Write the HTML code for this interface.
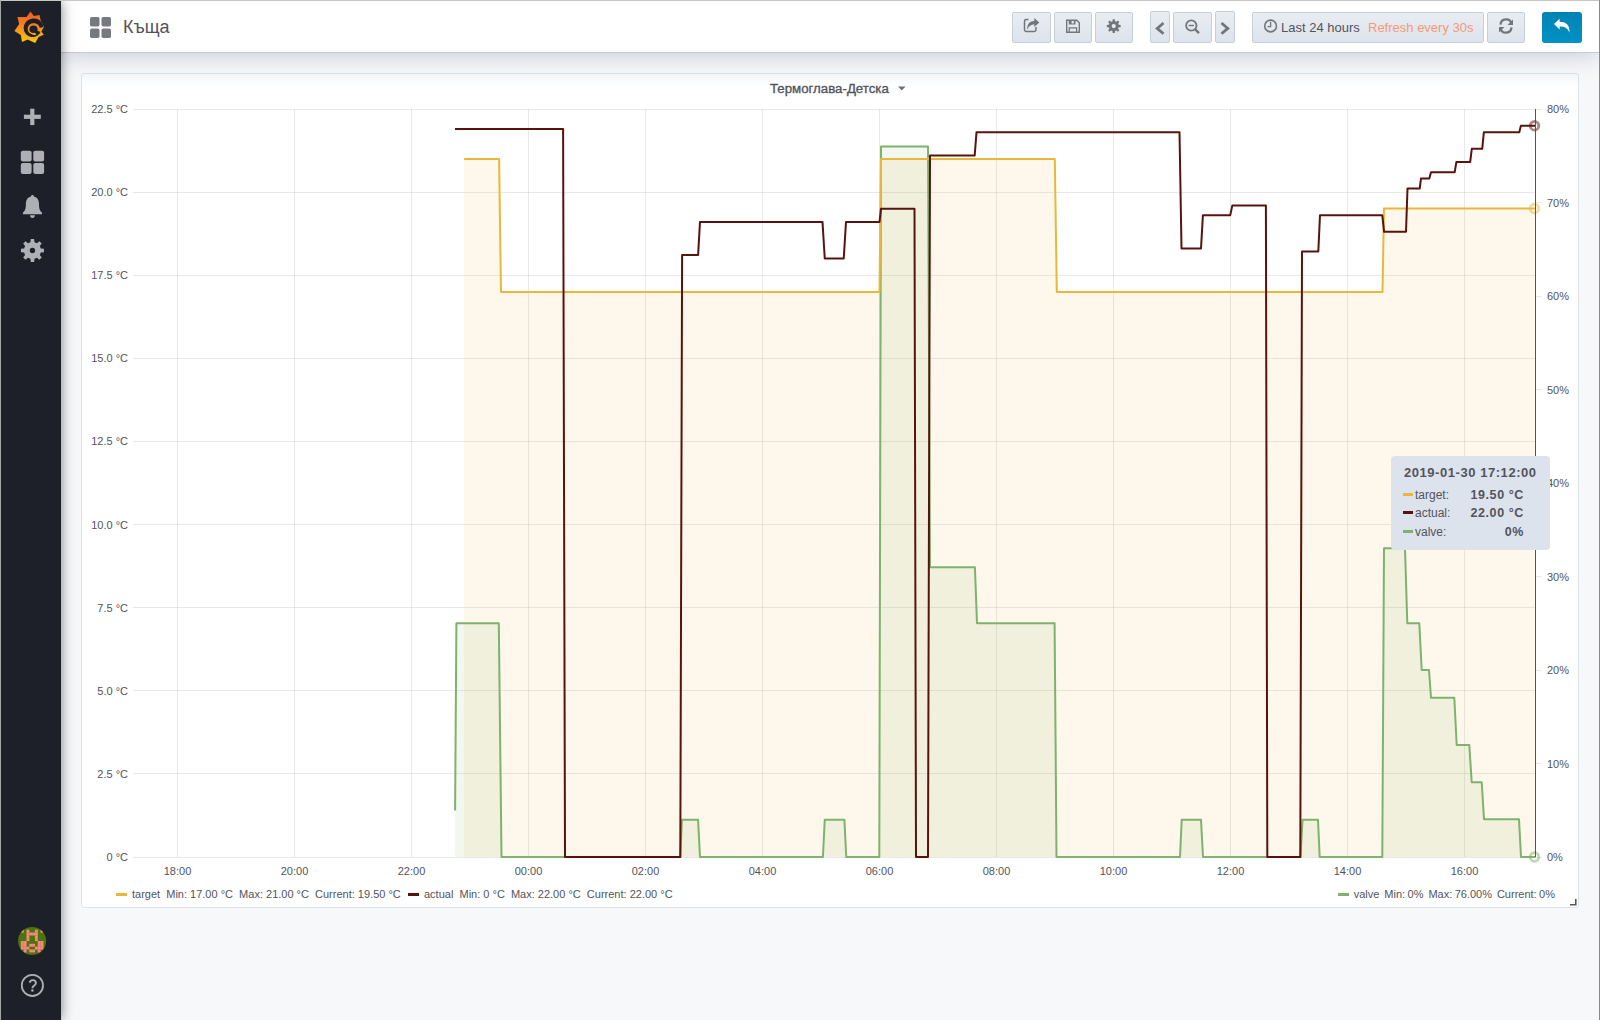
<!DOCTYPE html>
<html><head><meta charset="utf-8">
<style>
*{box-sizing:border-box}
html,body{margin:0;padding:0}
body{width:1600px;height:1020px;position:relative;overflow:hidden;background:#f7f8fa;font-family:"Liberation Sans",sans-serif;color:#52545c}
.abs{position:absolute}
#frame-t{position:absolute;left:0;top:0;width:1600px;height:1px;background:#c8c8c3;z-index:50}
#frame-l{position:absolute;left:0;top:0;width:1px;height:1020px;background:#a8a8a3;z-index:50}
#frame-r{position:absolute;left:1599px;top:0;width:1px;height:1020px;background:#8a8a85;z-index:50}
#side{position:absolute;left:1px;top:1px;width:60px;height:1019px;background:#1e2029;z-index:20;box-shadow:0 0 12px rgba(0,0,0,0.5)}
#nav{position:absolute;left:61px;top:1px;width:1538px;height:52px;background:#fff;border-bottom:1px solid #c5cdd8;z-index:10;box-shadow:0 4px 22px rgba(110,125,150,0.32)}
#panel{position:absolute;left:81px;top:73px;width:1498px;height:835px;background:linear-gradient(#f5f7fa,#fff 13px);border:1px solid #dde3ea;border-radius:3px}
.btn{position:absolute;top:12px;height:31px;border:1px solid #c6ced9;border-radius:2px;background:linear-gradient(#e9edf2,#dde3ec)}
.yl{position:absolute;left:82px;width:46px;text-align:right;font-size:11px;line-height:14px;color:#52545c;white-space:nowrap}
.yr{position:absolute;left:1547px;font-size:11px;line-height:14px;color:#52545c;white-space:nowrap}
.xl{position:absolute;top:864px;width:60px;text-align:center;font-size:11px;line-height:14px;color:#52545c}
.leg{position:absolute;top:887px;font-size:11px;line-height:14px;color:#52545c;white-space:nowrap}
.legi{display:inline-block;width:11px;height:3px;vertical-align:middle;margin-right:5px;position:relative;top:-1px}
.tt{position:absolute;left:1391px;top:456px;width:159px;height:94px;background:#dde3ec;border-radius:4px}
</style></head><body>
<div id="frame-t"></div><div id="frame-l"></div><div id="frame-r"></div>

<div id="side">
  <!-- grafana logo -->
  <svg class="abs" style="left:11px;top:8px" width="36" height="36" viewBox="0 0 36 36">
    <defs><linearGradient id="lg" x1="0" y1="0" x2="0" y2="1"><stop offset="0" stop-color="#f05a28"/><stop offset="0.4" stop-color="#f4801f"/><stop offset="1" stop-color="#fbca0a"/></linearGradient></defs>
    <polygon fill="url(#lg)" points="18.40,2.60 21.90,6.90 27.60,6.00 28.60,11.20 32.00,17.80 29.40,22.60 31.80,25.80 26.60,28.10 23.20,34.00 15.60,30.60 10.00,33.00 8.80,26.00 2.40,21.90 7.20,15.00 5.40,7.90 14.60,7.90"/>
    <polygon fill="#1e2029" points="31.64,17.87 31.41,16.88 31.09,15.92 30.68,15.01 30.19,14.14 29.62,13.34 28.99,12.59 28.29,11.91 27.54,11.31 26.74,10.78 25.90,10.34 25.03,9.98 24.14,9.71 23.23,9.52 22.31,9.42 21.40,9.41 20.50,9.49 19.62,9.65 18.76,9.89 17.94,10.20 17.16,10.60 16.38,10.98 15.65,11.45 14.96,11.97 14.33,12.56 13.75,13.21 13.24,13.91 12.79,14.65 12.42,15.43 12.12,16.25 11.90,17.09 11.76,17.94 11.70,18.81 11.72,19.67 11.83,20.53 12.01,21.38 12.28,22.21 12.62,23.00 13.03,23.77 13.51,24.49 14.06,25.16 14.67,25.77 15.34,26.33 16.07,26.79 16.84,27.18 17.64,27.50 18.46,27.73 19.30,27.89 20.15,27.97 20.99,27.97 21.83,27.88 22.66,27.72 23.46,27.49 24.24,27.18 24.98,26.80 25.67,26.35 26.32,25.84 26.92,25.28 27.46,24.66 27.94,24.00 28.35,23.30 27.54,23.40 27.08,23.91 26.59,24.37 26.06,24.77 25.51,25.11 24.93,25.39 24.34,25.61 23.74,25.77 23.13,25.88 22.53,25.92 21.94,25.90 21.36,25.83 20.80,25.70 20.27,25.52 19.77,25.30 19.29,25.03 18.81,24.82 18.35,24.56 17.91,24.26 17.51,23.92 17.14,23.55 16.80,23.14 16.51,22.70 16.26,22.24 16.05,21.75 15.89,21.25 15.78,20.73 15.72,20.21 15.70,19.68 15.74,19.16 15.82,18.64 15.96,18.13 16.14,17.63 16.36,17.15 16.64,16.70 16.95,16.28 17.30,15.88 17.69,15.52 18.10,15.20 18.55,14.92 19.02,14.68 19.51,14.49 20.02,14.35 20.54,14.25 21.07,14.20 21.59,14.21 22.13,14.19 22.67,14.23 23.21,14.32 23.74,14.47 24.27,14.66 24.78,14.91 25.26,15.21 25.73,15.55 26.16,15.95 26.56,16.39 26.91,16.87 27.23,17.38 27.49,17.93 27.70,18.51 27.86,19.11"/>
    <ellipse cx="21.5" cy="20.2" rx="4.1" ry="3.8" fill="#1e2029"/>
    <polygon fill="#1e2029" points="23.85,21.06 28.45,23.01 25.02,26.82 22.36,22.55"/>
  </svg>
  <!-- sidebar icons -->
  <svg class="abs" style="left:-1px;top:-1px" width="62" height="1020" viewBox="0 0 62 1020">
    <g fill="#aeb0b5">
      <rect x="23.9" y="114.7" width="16.9" height="4.2"/>
      <rect x="30.2" y="108.7" width="4.2" height="16.4"/>
      <rect x="20.8" y="150.8" width="10.8" height="10.8" rx="2"/><rect x="33.3" y="150.8" width="10.8" height="10.8" rx="2"/>
      <rect x="20.8" y="163.1" width="10.8" height="10.8" rx="2"/><rect x="33.3" y="163.1" width="10.8" height="10.8" rx="2"/>
      <path d="M32.45,195 C33.4,195 33.9,195.6 33.9,196.5 C37.6,197.3 39,200.5 39,204 C39,208.8 39.9,211 42,212.6 L42,214.3 L22.9,214.3 L22.9,212.6 C25,211 25.9,208.8 25.9,204 C25.9,200.5 27.3,197.3 31,196.5 C31,195.6 31.5,195 32.45,195 Z M30,215.2 L34.9,215.2 C34.9,216.8 33.9,218 32.45,218 C31,218 30,216.8 30,215.2 Z"/>
      <path fill-rule="evenodd" d="M40.80,248.43 L43.93,248.87 L43.93,252.13 L40.80,252.57 L39.82,254.94 L41.73,257.46 L39.41,259.78 L36.89,257.87 L34.52,258.85 L34.08,261.98 L30.82,261.98 L30.38,258.85 L28.01,257.87 L25.49,259.78 L23.17,257.46 L25.08,254.94 L24.10,252.57 L20.97,252.13 L20.97,248.87 L24.10,248.43 L25.08,246.06 L23.17,243.54 L25.49,241.22 L28.01,243.13 L30.38,242.15 L30.82,239.02 L34.08,239.02 L34.52,242.15 L36.89,243.13 L39.41,241.22 L41.73,243.54 L39.82,246.06 Z M35.15,250.50 A2.7,2.7 0 1 0 29.75,250.50 A2.7,2.7 0 1 0 35.15,250.50 Z"/>
    </g>
  </svg>
  <!-- avatar + help -->
  <svg class="abs" style="left:-1px;top:898px" width="62" height="121" viewBox="0 899 62 121">
    <defs><clipPath id="cc"><circle cx="32.1" cy="941" r="14"/></clipPath></defs>
    <g clip-path="url(#cc)"><rect x="17" y="926" width="30" height="30" fill="#4b750c"/>
    <g fill="#f5877f"><rect x="20.82" y="929.72" width="2.95" height="2.95"/><rect x="26.46" y="929.72" width="2.95" height="2.95"/><rect x="34.92" y="929.72" width="2.95" height="2.95"/><rect x="40.56" y="929.72" width="2.95" height="2.95"/><rect x="26.46" y="932.54" width="2.95" height="2.95"/><rect x="29.28" y="932.54" width="2.95" height="2.95"/><rect x="32.10" y="932.54" width="2.95" height="2.95"/><rect x="34.92" y="932.54" width="2.95" height="2.95"/><rect x="26.46" y="935.36" width="2.95" height="2.95"/><rect x="34.92" y="935.36" width="2.95" height="2.95"/><rect x="26.46" y="938.18" width="2.95" height="2.95"/><rect x="34.92" y="938.18" width="2.95" height="2.95"/><rect x="20.82" y="941.00" width="2.95" height="2.95"/><rect x="23.64" y="941.00" width="2.95" height="2.95"/><rect x="37.74" y="941.00" width="2.95" height="2.95"/><rect x="40.56" y="941.00" width="2.95" height="2.95"/><rect x="20.82" y="943.82" width="2.95" height="2.95"/><rect x="23.64" y="943.82" width="2.95" height="2.95"/><rect x="29.28" y="943.82" width="2.95" height="2.95"/><rect x="32.10" y="943.82" width="2.95" height="2.95"/><rect x="37.74" y="943.82" width="2.95" height="2.95"/><rect x="40.56" y="943.82" width="2.95" height="2.95"/><rect x="20.82" y="946.64" width="2.95" height="2.95"/><rect x="23.64" y="946.64" width="2.95" height="2.95"/><rect x="26.46" y="946.64" width="2.95" height="2.95"/><rect x="34.92" y="946.64" width="2.95" height="2.95"/><rect x="37.74" y="946.64" width="2.95" height="2.95"/><rect x="40.56" y="946.64" width="2.95" height="2.95"/><rect x="23.64" y="949.46" width="2.95" height="2.95"/><rect x="29.28" y="949.46" width="2.95" height="2.95"/><rect x="32.10" y="949.46" width="2.95" height="2.95"/><rect x="37.74" y="949.46" width="2.95" height="2.95"/></g></g>
    <circle cx="32.4" cy="985.4" r="10.6" fill="none" stroke="#aeb0b5" stroke-width="1.8"/>
    <path d="M29.6,982.6 C30.2,980.8 31.4,980.1 32.7,980.1 C34.6,980.1 35.9,981.3 35.9,983 C35.9,984.8 34.4,985.4 33.4,986.2 C32.7,986.8 32.4,987.3 32.4,988.3" fill="none" stroke="#aeb0b5" stroke-width="1.9"/>
    <circle cx="32.4" cy="990.5" r="1.2" fill="#aeb0b5"/>
  </svg>
</div>

<div id="nav"></div>
<div class="abs" style="left:0;top:0;width:1600px;height:60px;z-index:30">
  <svg class="abs" style="left:90px;top:17px" width="21" height="21" viewBox="0 0 21 21"><g fill="#767980"><rect x="0" y="0" width="9.5" height="9.5" rx="1.8"/><rect x="11.5" y="0" width="9.5" height="9.5" rx="1.8"/><rect x="0" y="11.5" width="9.5" height="9.5" rx="1.8"/><rect x="11.5" y="11.5" width="9.5" height="9.5" rx="1.8"/></g></svg>
  <div class="abs" style="left:123px;top:16px;font-size:18px;line-height:22px;color:#52545c">Къща</div>
  <div class="btn" style="left:1012px;width:39px"></div>
  <div class="btn" style="left:1054px;width:38px"></div>
  <div class="btn" style="left:1095px;width:38px"></div>
  <div class="btn" style="left:1150px;top:11px;height:32px;width:20px"></div>
  <div class="btn" style="left:1173px;width:39px"></div>
  <div class="btn" style="left:1215px;top:11px;height:32px;width:20px"></div>
  <div class="btn" style="left:1252px;width:232px"></div>
  <div class="btn" style="left:1487px;width:38px"></div>
  <div class="abs" style="left:1542px;top:12px;width:40px;height:31px;border-radius:3px;background:linear-gradient(#0083b3,#0091c6)"></div>
  <div class="abs" style="left:1281px;top:20px;font-size:13px;line-height:16px;color:#52545c;white-space:nowrap">Last 24 hours</div>
  <div class="abs" style="left:1368px;top:20px;font-size:13px;line-height:16px;color:#f89a74;white-space:nowrap">Refresh every 30s</div>
  <svg class="abs" style="left:0;top:0" width="1600" height="60" viewBox="0 0 1600 60">
    <g fill="#72757d" stroke="none">
      <path fill="none" stroke="#72757d" stroke-width="1.5" d="M1028.5,19.5 H1026.2 Q1024.5,19.5 1024.5,21.2 V29.8 Q1024.5,31.5 1026.2,31.5 H1034.3 Q1036,31.5 1036,29.8 V27"/>
      <path d="M1027.1,29.8 C1027.1,24.2 1029.6,20.9 1034.3,20.9 V18.1 L1039.3,22.6 L1034.3,27.1 V24.4 C1031.3,24.4 1028.7,25.8 1027.1,29.8 Z"/>
      <path fill-rule="evenodd" d="M1066,19.5 H1077 L1080,22.5 V33 H1066 Z M1067.4,20.9 V31.6 H1078.6 V23.1 L1076.4,20.9 H1075.5 V24.6 H1068.8 V20.9 Z M1071.6,21 H1073.8 V23.6 H1071.6 Z M1068.6,27.2 H1077.2 V31.6 H1068.6 Z M1069.8,28.4 V31.6 H1076 V28.4 Z"/>
      <path fill-rule="evenodd" d="M1118.69,24.83 L1120.67,25.06 L1120.67,27.14 L1118.69,27.37 L1118.14,28.70 L1119.38,30.26 L1117.91,31.73 L1116.35,30.49 L1115.02,31.04 L1114.79,33.02 L1112.71,33.02 L1112.48,31.04 L1111.15,30.49 L1109.59,31.73 L1108.12,30.26 L1109.36,28.70 L1108.81,27.37 L1106.83,27.14 L1106.83,25.06 L1108.81,24.83 L1109.36,23.50 L1108.12,21.94 L1109.59,20.47 L1111.15,21.71 L1112.48,21.16 L1112.71,19.18 L1114.79,19.18 L1115.02,21.16 L1116.35,21.71 L1117.91,20.47 L1119.38,21.94 L1118.14,23.50 Z M1115.85,26.10 A2.1,2.1 0 1 0 1111.65,26.10 A2.1,2.1 0 1 0 1115.85,26.10 Z"/>
    </g>
    <g fill="none" stroke="#72757d">
      <path stroke-width="2.8" d="M1163.5,23 L1157.2,28.4 L1163.5,33.8"/>
      <path stroke-width="2.8" d="M1221.5,23 L1227.8,28.4 L1221.5,33.8"/>
      <circle cx="1191.3" cy="25.5" r="5.2" stroke-width="1.8"/>
      <path stroke-width="2.4" d="M1195.2,29.4 L1199,33.2"/>
      <path stroke-width="1.4" d="M1188.6,25.5 H1194"/>
      <circle cx="1270.6" cy="26" r="5.9" stroke-width="1.6"/>
      <path stroke-width="1.3" d="M1270.6,21.8 V26.6 H1267.6"/>
      <path stroke-width="2.2" d="M1511.5,23.5 A5.6,5.6 0 0 0 1500.5,24.6"/>
      <path stroke-width="2.2" d="M1500.5,28.5 A5.6,5.6 0 0 0 1511.5,27.4"/>
    </g>
    <g fill="#72757d">
      <path d="M1513,19.5 V25 H1507.5 Z"/>
      <path d="M1499,32.5 V27 H1504.5 Z"/>
    </g>
    <path fill="#fff" d="M1554,24 L1559.6,18.8 V21.8 C1565.5,21.8 1570,24.5 1569.5,32.8 C1568,28 1564.5,26.5 1559.6,26.5 V29.4 Z"/>
  </svg>
</div>
<div id="panel"></div>

<svg width="1600" height="1020" viewBox="0 0 1600 1020" style="position:absolute;left:0;top:0">
<g stroke="#000" stroke-opacity="0.088" stroke-width="1" shape-rendering="crispEdges"><line x1="133.0" y1="857.0" x2="1535.5" y2="857.0"/><line x1="133.0" y1="773.9" x2="1535.5" y2="773.9"/><line x1="133.0" y1="690.8" x2="1535.5" y2="690.8"/><line x1="133.0" y1="607.7" x2="1535.5" y2="607.7"/><line x1="133.0" y1="524.6" x2="1535.5" y2="524.6"/><line x1="133.0" y1="441.4" x2="1535.5" y2="441.4"/><line x1="133.0" y1="358.3" x2="1535.5" y2="358.3"/><line x1="133.0" y1="275.2" x2="1535.5" y2="275.2"/><line x1="133.0" y1="192.1" x2="1535.5" y2="192.1"/><line x1="133.0" y1="109.0" x2="1535.5" y2="109.0"/><line x1="177.5" y1="109.0" x2="177.5" y2="857.0"/><line x1="294.5" y1="109.0" x2="294.5" y2="857.0"/><line x1="411.5" y1="109.0" x2="411.5" y2="857.0"/><line x1="528.5" y1="109.0" x2="528.5" y2="857.0"/><line x1="645.5" y1="109.0" x2="645.5" y2="857.0"/><line x1="762.5" y1="109.0" x2="762.5" y2="857.0"/><line x1="879.5" y1="109.0" x2="879.5" y2="857.0"/><line x1="996.5" y1="109.0" x2="996.5" y2="857.0"/><line x1="1113.5" y1="109.0" x2="1113.5" y2="857.0"/><line x1="1230.5" y1="109.0" x2="1230.5" y2="857.0"/><line x1="1347.5" y1="109.0" x2="1347.5" y2="857.0"/><line x1="1464.5" y1="109.0" x2="1464.5" y2="857.0"/></g>
<g stroke="#000" stroke-opacity="0.088" stroke-width="1" shape-rendering="crispEdges"><line x1="1535.5" y1="857.0" x2="1541.5" y2="857.0"/><line x1="1535.5" y1="763.5" x2="1541.5" y2="763.5"/><line x1="1535.5" y1="670.0" x2="1541.5" y2="670.0"/><line x1="1535.5" y1="576.5" x2="1541.5" y2="576.5"/><line x1="1535.5" y1="483.0" x2="1541.5" y2="483.0"/><line x1="1535.5" y1="389.5" x2="1541.5" y2="389.5"/><line x1="1535.5" y1="296.0" x2="1541.5" y2="296.0"/><line x1="1535.5" y1="202.5" x2="1541.5" y2="202.5"/><line x1="1535.5" y1="109.0" x2="1541.5" y2="109.0"/></g>
<polygon points="455.1,857 455.1,810.6 456.4,623.3 498.8,623.3 501.5,857 680.3,857 681.9,819.75 698.1,819.75 700,857 822.9,857 824.75,819.75 844.4,819.75 846.25,857 879.3,857 881,146.5 928,146.5 930,567.2 974.9,567.2 977,623.2 1054.6,623.2 1056.5,857 1180,857 1181.7,819.8 1201,819.8 1203,857 1300.5,857 1302.5,819.8 1318,819.8 1319.7,857 1382.3,857 1384,548.3 1405,548.3 1407.3,623.3 1419.3,623.3 1421.7,670 1429,670 1431,697.7 1454.3,697.7 1456.7,745 1469.3,745 1471.7,782.3 1481.7,782.3 1484,819.3 1519,819.3 1521,857 1535.5,857 1535.5,857" fill="#7EB26D" fill-opacity="0.1"/>
<polygon points="464.1,857 464.1,159 499.1,159 501,291.9 879.5,291.9 881,159 1054.8,159 1056.8,291.9 1382.5,291.9 1384,208.5 1535.5,208.5 1535.5,857" fill="#EAB839" fill-opacity="0.1"/>
<polyline points="455.1,810.6 456.4,623.3 498.8,623.3 501.5,857 680.3,857 681.9,819.75 698.1,819.75 700,857 822.9,857 824.75,819.75 844.4,819.75 846.25,857 879.3,857 881,146.5 928,146.5 930,567.2 974.9,567.2 977,623.2 1054.6,623.2 1056.5,857 1180,857 1181.7,819.8 1201,819.8 1203,857 1300.5,857 1302.5,819.8 1318,819.8 1319.7,857 1382.3,857 1384,548.3 1405,548.3 1407.3,623.3 1419.3,623.3 1421.7,670 1429,670 1431,697.7 1454.3,697.7 1456.7,745 1469.3,745 1471.7,782.3 1481.7,782.3 1484,819.3 1519,819.3 1521,857 1535.5,857" fill="none" stroke="#7EB26D" stroke-width="2" stroke-linejoin="round"/>
<polyline points="464.1,159 499.1,159 501,291.9 879.5,291.9 881,159 1054.8,159 1056.8,291.9 1382.5,291.9 1384,208.5 1535.5,208.5" fill="none" stroke="#EAB839" stroke-width="2" stroke-linejoin="round"/>
<polyline points="455,129 563.1,129 565,857 680.3,857 682.1,255 698.1,255 700,221.9 822.5,221.9 824.75,258.4 843.75,258.4 846,221.9 879.5,221.9 881,208.8 914.5,208.8 916,857 928,857 930,155.5 974.7,155.5 976.5,132.2 1179.5,132.2 1181.5,248.5 1201,248.5 1202.9,215.3 1230.2,215.3 1232.3,205.6 1265.9,205.6 1267.3,857 1300.3,857 1302,251.5 1318.3,251.5 1320,215.3 1382.3,215.3 1384.1,231.8 1406,231.8 1407.5,188.5 1419.7,188.5 1421,178.6 1429.3,178.6 1431,172.2 1454.7,172.2 1456.4,161.9 1470.2,161.9 1471.8,148.8 1482.2,148.8 1483.9,132.2 1519.3,132.2 1520.9,125.8 1535.5,125.8" fill="none" stroke="#58140C" stroke-width="2" stroke-linejoin="round"/>
<circle cx="1534.5" cy="125.8" r="4.3" fill="none" stroke="#58140C" stroke-opacity="0.5" stroke-width="2.8"/>
<circle cx="1534.5" cy="208.5" r="4.3" fill="none" stroke="#EAB839" stroke-opacity="0.5" stroke-width="2.8"/>
<circle cx="1534.5" cy="857" r="4.3" fill="none" stroke="#7EB26D" stroke-opacity="0.5" stroke-width="2.8"/>
<line x1="1535.5" y1="109.0" x2="1535.5" y2="857.0" stroke="#c8202c" stroke-width="1"/>
</svg>
<div class="yl" style="top:850.0px">0 °C</div>
<div class="yl" style="top:766.9px">2.5 °C</div>
<div class="yl" style="top:683.8px">5.0 °C</div>
<div class="yl" style="top:600.7px">7.5 °C</div>
<div class="yl" style="top:517.6px">10.0 °C</div>
<div class="yl" style="top:434.4px">12.5 °C</div>
<div class="yl" style="top:351.3px">15.0 °C</div>
<div class="yl" style="top:268.2px">17.5 °C</div>
<div class="yl" style="top:185.1px">20.0 °C</div>
<div class="yl" style="top:102.0px">22.5 °C</div>
<div class="yr" style="top:850.0px">0%</div>
<div class="yr" style="top:756.5px">10%</div>
<div class="yr" style="top:663.0px">20%</div>
<div class="yr" style="top:569.5px">30%</div>
<div class="yr" style="top:476.0px">40%</div>
<div class="yr" style="top:382.5px">50%</div>
<div class="yr" style="top:289.0px">60%</div>
<div class="yr" style="top:195.5px">70%</div>
<div class="yr" style="top:102.0px">80%</div>
<div class="xl" style="left:147.5px">18:00</div>
<div class="xl" style="left:264.5px">20:00</div>
<div class="xl" style="left:381.5px">22:00</div>
<div class="xl" style="left:498.5px">00:00</div>
<div class="xl" style="left:615.5px">02:00</div>
<div class="xl" style="left:732.5px">04:00</div>
<div class="xl" style="left:849.5px">06:00</div>
<div class="xl" style="left:966.5px">08:00</div>
<div class="xl" style="left:1083.5px">10:00</div>
<div class="xl" style="left:1200.5px">12:00</div>
<div class="xl" style="left:1317.5px">14:00</div>
<div class="xl" style="left:1434.5px">16:00</div>

<div class="abs" style="left:770px;top:81px;font-size:13.25px;line-height:16px;color:#52545c;-webkit-text-stroke:0.35px #52545c;white-space:nowrap">Термоглава-Детска</div>
<svg class="abs" style="left:897px;top:86px" width="10" height="6" viewBox="0 0 10 6"><path d="M1,0.5 H8.6 L4.8,4.6 Z" fill="#6e7077"/></svg>

<div class="leg" style="left:116px"><span class="legi" style="background:#EAB839"></span>target&nbsp; Min: 17.00 °C&nbsp; Max: 21.00 °C&nbsp; Current: 19.50 °C</div>
<div class="leg" style="left:408px"><span class="legi" style="background:#58140C"></span>actual&nbsp; Min: 0 °C&nbsp; Max: 22.00 °C&nbsp; Current: 22.00 °C</div>
<div class="leg" style="right:45px;word-spacing:-0.6px"><span class="legi" style="background:#7EB26D"></span>valve&nbsp; Min: 0%&nbsp; Max: 76.00%&nbsp; Current: 0%</div>

<svg class="abs" style="left:1568px;top:897px" width="10" height="10" viewBox="0 0 10 10"><path d="M7.8,2 V7.8 H2" fill="none" stroke="#55575e" stroke-width="1.6"/></svg>
<div class="tt">
  <div class="abs" style="left:13px;top:9px;font-size:13px;line-height:16px;font-weight:bold;letter-spacing:0.55px;color:#52545c;white-space:nowrap">2019-01-30 17:12:00</div>
  <div class="abs" style="left:12px;top:37px;width:10px;height:3px;background:#EAB839"></div>
  <div class="abs" style="left:24px;top:32px;font-size:12px;line-height:14px;color:#52545c">target:</div>
  <div class="abs" style="left:40px;top:32px;width:93px;text-align:right;font-size:12.5px;line-height:14px;font-weight:bold;letter-spacing:0.6px;color:#52545c;white-space:nowrap">19.50 °C</div>
  <div class="abs" style="left:12px;top:55px;width:10px;height:3px;background:#58140C"></div>
  <div class="abs" style="left:24px;top:50px;font-size:12px;line-height:14px;color:#52545c">actual:</div>
  <div class="abs" style="left:40px;top:50px;width:93px;text-align:right;font-size:12.5px;line-height:14px;font-weight:bold;letter-spacing:0.6px;color:#52545c;white-space:nowrap">22.00 °C</div>
  <div class="abs" style="left:12px;top:74px;width:10px;height:3px;background:#7EB26D"></div>
  <div class="abs" style="left:24px;top:69px;font-size:12px;line-height:14px;color:#52545c">valve:</div>
  <div class="abs" style="left:40px;top:69px;width:93px;text-align:right;font-size:12.5px;line-height:14px;font-weight:bold;letter-spacing:0.6px;color:#52545c;white-space:nowrap">0%</div>
</div>
</body></html>
